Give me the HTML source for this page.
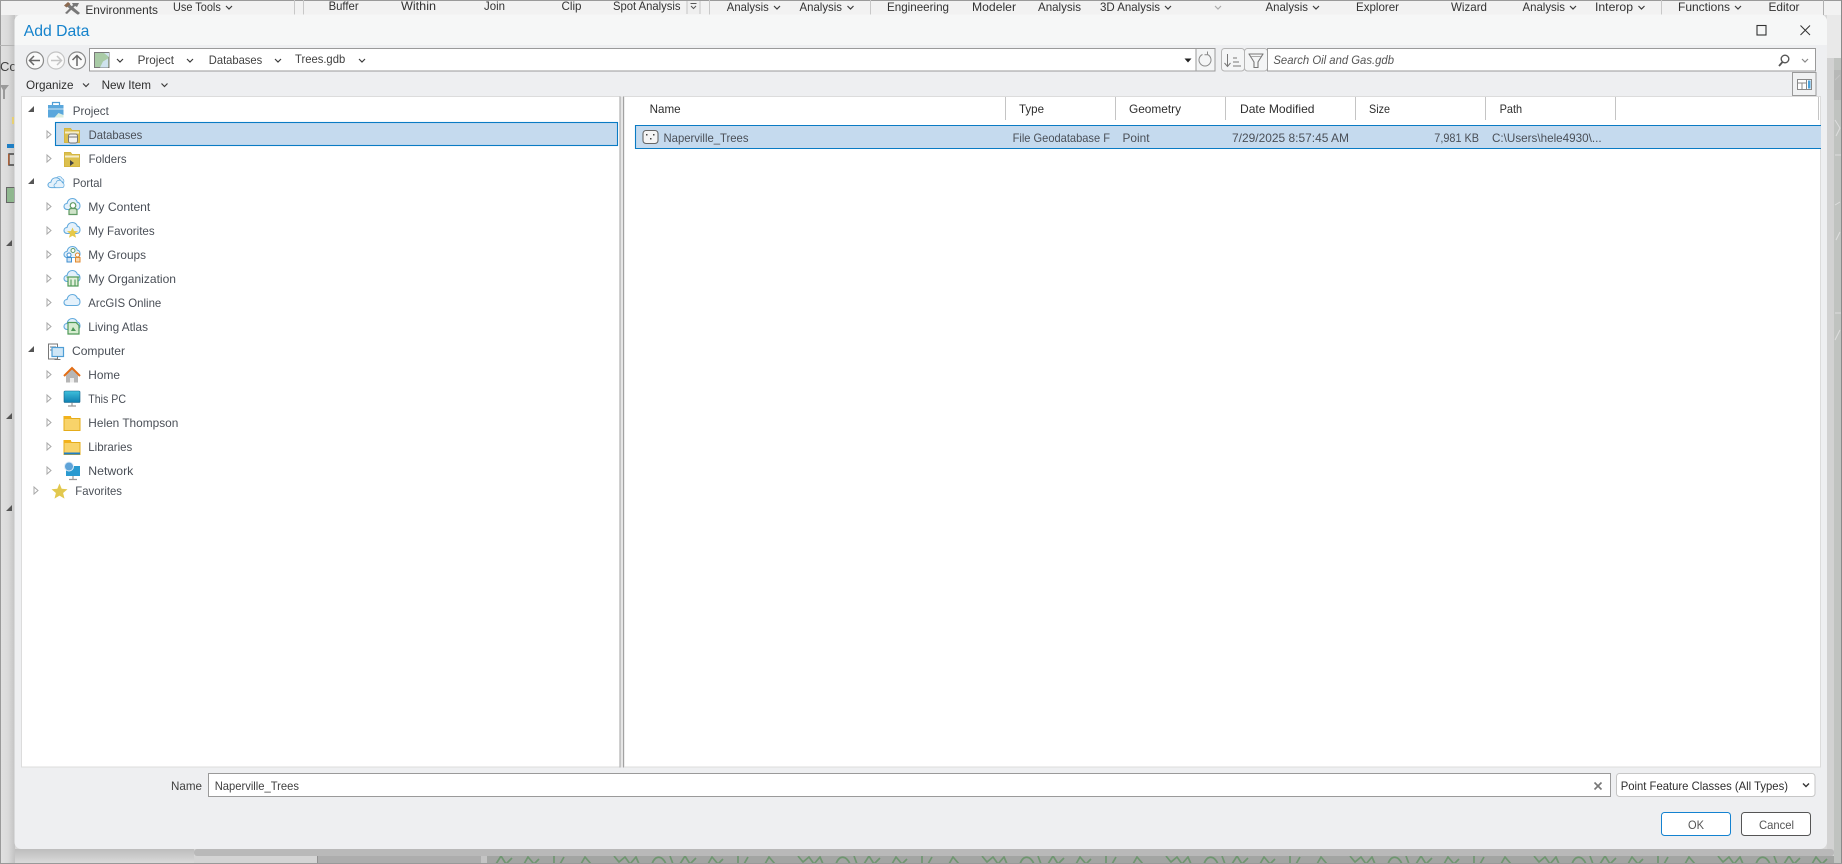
<!DOCTYPE html>
<html><head><meta charset="utf-8"><title>Add Data</title>
<style>
html,body{margin:0;padding:0;width:1842px;height:864px;overflow:hidden;background:#d8d8d8}
svg{display:block}
text{font-family:"Liberation Sans",sans-serif;font-size:12px;fill:#404040}
.t text{fill:#4a4f57}
.h text{fill:#2e2e2e}
.r text{fill:#333}
.c{fill:none;stroke:#3c3c3c;stroke-width:1.2}
.e{fill:#fff;stroke:#a8a8a8;stroke-width:1}
.rt{fill:#555}
.b{fill:#fff;stroke:#9a9a9a;stroke-width:1}
</style></head><body>
<svg width="1842" height="864" viewBox="0 0 1842 864" xmlns="http://www.w3.org/2000/svg">
<defs>
<linearGradient id="ls" x1="0" x2="1" y1="0" y2="0"><stop offset="0" stop-color="#e0e0e0"/><stop offset=".5" stop-color="#dadada"/><stop offset="1" stop-color="#c2c2c2"/></linearGradient>
<linearGradient id="bs" x1="0" x2="0" y1="0" y2="1"><stop offset="0" stop-color="#bdbdbd"/><stop offset="1" stop-color="#dcdcdc"/></linearGradient>
<linearGradient id="mon" x1="0" x2="0" y1="0" y2="1"><stop offset="0" stop-color="#3fc0dc"/><stop offset="1" stop-color="#0f7fb0"/></linearGradient>
<pattern id="map" width="184" height="10" patternUnits="userSpaceOnUse" x="494" y="855">
<rect width="184" height="10" fill="#a3a5a3"/>
<path d="M2 9l5-8 5 8 6-6M30 9l4-7 6 7 5-5M60 1v8h6l4-7M87 9l4-7 6 7M120 1l5 6 6-5 5 7 6-7 3 7M158 9c3-9 10-9 14 0M176 1l3 8" fill="none" stroke="#6f9670" stroke-width="1.700"/>
</pattern>
<g id="cloud"><path d="M3.500 13.500C1 13.500 0 12 0 10.500 0 8.800 1.300 7.600 3 7.500 3.500 4.200 5.800 2.500 8.300 2.500c2.500 0 4.300 1.500 5 3.700C15 6.400 16 8 16 10c0 2-1.300 3.500-3.500 3.500z" fill="#e4f1fb" stroke="#62aadd" stroke-width="1.100"/></g>
<g id="folder"><path d="M0 3.500V1.500h6l1.500 2h8.500v12H0z" fill="#f8d36a" stroke="#e5ac1a" stroke-width="1"/><rect x="0" y="1" width="7" height="3" fill="#f2b21c"/></g>
<g id="fy"><path d="M.5 15.500V1.500h6l1.500 2h7.500v12z" fill="#dcc04e" stroke="#d4b541"/><rect x="1" y="4.500" width="14" height="2" fill="#fff" opacity=".7"/></g>
</defs>

<!-- background app -->
<rect width="1842" height="864" fill="#d8d8d8"/>
<rect x="0" y="0" width="1842" height="15" fill="#f2f2f2"/>
<rect x="0" y="0" width="1842" height="1" fill="#9a9a9a"/>
<rect x="0" y="0" width="1" height="864" fill="#9a9a9a"/>
<rect x="1841" y="0" width="1" height="864" fill="#8a8a8a"/>
<rect x="1" y="15" width="14" height="849" fill="url(#ls)"/>
<rect x="0" y="45" width="15" height="1" fill="#b4b4b4"/>
<rect x="294" y="0" width="1" height="15" fill="#c8c8c8"/><rect x="303" y="0" width="1" height="15" fill="#c8c8c8"/>
<rect x="709" y="0" width="1" height="15" fill="#c8c8c8"/><rect x="870" y="0" width="1" height="15" fill="#c8c8c8"/>
<rect x="1661" y="0" width="1" height="15" fill="#c8c8c8"/><rect x="1823" y="0" width="1" height="15" fill="#b0b0b0"/>
<rect x="687" y="1" width="13" height="13" fill="#efefef"/><path d="M687 1v13M700 1v13" stroke="#c4c4c4" fill="none"/>
<path d="M690.500 3.500h6M691 6l2.500 2.500L696 6" fill="none" stroke="#555"/>
<path d="M65 5l3-2 12 10-2 2zM79 3l-2 4-2-1-8 8-2-1 8-8-1-2z" fill="#787878"/><path d="M64 5.500l4-3.500 2.500 2-4 3.500z" fill="#8c6a50"/>
<g class="r">
<text x="85.400" y="14" textLength="72.600" lengthAdjust="spacingAndGlyphs">Environments</text>
<text x="173" y="11" textLength="47.800" lengthAdjust="spacingAndGlyphs">Use Tools</text>
<text x="328.600" y="10" textLength="30" lengthAdjust="spacingAndGlyphs">Buffer</text>
<text x="401" y="10" textLength="35" lengthAdjust="spacingAndGlyphs">Within</text>
<text x="484" y="10" textLength="21" lengthAdjust="spacingAndGlyphs">Join</text>
<text x="561.500" y="10" textLength="20" lengthAdjust="spacingAndGlyphs">Clip</text>
<text x="613" y="10" textLength="67.500" lengthAdjust="spacingAndGlyphs">Spot Analysis</text>
<text x="726.800" y="11" textLength="42" lengthAdjust="spacingAndGlyphs">Analysis</text>
<text x="799.500" y="11" textLength="42.500" lengthAdjust="spacingAndGlyphs">Analysis</text>
<text x="887" y="11" textLength="62" lengthAdjust="spacingAndGlyphs">Engineering</text>
<text x="972" y="11" textLength="44" lengthAdjust="spacingAndGlyphs">Modeler</text>
<text x="1038" y="11" textLength="43" lengthAdjust="spacingAndGlyphs">Analysis</text>
<text x="1100" y="11" textLength="60" lengthAdjust="spacingAndGlyphs">3D Analysis</text>
<text x="1265.500" y="11" textLength="42.500" lengthAdjust="spacingAndGlyphs">Analysis</text>
<text x="1356" y="11" textLength="43" lengthAdjust="spacingAndGlyphs">Explorer</text>
<text x="1451" y="11" textLength="36" lengthAdjust="spacingAndGlyphs">Wizard</text>
<text x="1522.500" y="11" textLength="42.500" lengthAdjust="spacingAndGlyphs">Analysis</text>
<text x="1595" y="11" textLength="38" lengthAdjust="spacingAndGlyphs">Interop</text>
<text x="1678" y="11" textLength="52" lengthAdjust="spacingAndGlyphs">Functions</text>
<text x="1768.500" y="11" textLength="31" lengthAdjust="spacingAndGlyphs">Editor</text>
</g>
<g class="c">
<path d="M226 6l3 3 3-3M774 6l3 3 3-3M847.500 6l3 3 3-3M1165 6l3 3 3-3M1313 6l3 3 3-3M1570 6l3 3 3-3M1638.500 6l3 3 3-3M1735 6l3 3 3-3"/>
<path d="M1215 6l3 3 3-3" stroke="#aaa"/>
</g>
<!-- left slivers of background UI -->
<text x="0" y="71" style="font-size:13px">Co</text>
<path d="M0 85h9l-4 5v9H3v-9z" fill="#9a9a9a"/>
<rect x="12" y="117" width="2" height="7" fill="#e6cf72"/>
<rect x="7" y="144" width="7" height="4" fill="#1f7fc4"/>
<path d="M14 154H9v11h5" fill="none" stroke="#444" stroke-width="1.500"/><rect x="8" y="154" width="1.500" height="11" fill="#a8603a"/>
<rect x="6.500" y="187.500" width="8" height="15" fill="#8fb78f" stroke="#666"/>
<path d="M12 240v6H6zM12 413v6H6zM12 505v6H6z" fill="#555"/>
<!-- right side strips -->
<rect x="1827" y="15" width="7" height="849" fill="#d2d2d2"/>
<rect x="1827" y="15" width="14" height="43" fill="#e9e9e9"/>
<rect x="1834" y="58" width="7" height="806" fill="#c0c3c0"/>
<path d="M1835 80l5-5M1835 120l5 8-4 8M1835 155h6M1835 205l5-3M1836 240l4-8M1835 313h6M1835 340l5-10" stroke="#dedede" fill="none"/>
<rect x="1834" y="70" width="7" height="30" fill="#b0b0b0" opacity=".6"/>
<!-- bottom strips -->
<rect x="15" y="849" width="179" height="15" fill="url(#bs)"/>
<rect x="194" y="849" width="1640" height="7" fill="#b9b9b9" rx="3"/>
<rect x="194" y="856" width="123" height="8" fill="#d4d4d4"/>
<rect x="317" y="856" width="173" height="8" fill="#adadad"/>
<rect x="317" y="856" width="1" height="8" fill="#909090"/>
<rect x="481" y="856" width="6" height="8" fill="#c4c4c4"/>
<rect x="494" y="856" width="1340" height="8" fill="url(#map)"/>
<rect x="487" y="856" width="7" height="8" fill="#a3a5a3"/>
<rect x="0" y="863" width="1842" height="1" fill="#999"/>

<!-- dialog -->
<rect x="14.500" y="14.500" width="1812.500" height="834.500" rx="7" fill="#eeeff1"/>
<path d="M14.500 45V21.500a7 7 0 0 1 7-7H1820a7 7 0 0 1 7 7V45z" fill="#f6f7f7"/>
<text x="23.700" y="36" textLength="65.700" lengthAdjust="spacingAndGlyphs" style="font-size:16px;fill:#1583cc">Add Data</text>
<rect x="1757" y="25.500" width="9" height="9.500" fill="none" stroke="#333" stroke-width="1.100"/>
<path d="M1800.500 25.500l9.500 9.500M1810 25.500l-9.500 9.500" stroke="#333" stroke-width="1" fill="none"/>

<!-- nav -->
<g fill="#fafafa" stroke="#8a8a8a" stroke-width="1.200">
<circle cx="35" cy="60.500" r="8.500"/><circle cx="77" cy="60.500" r="8.500"/>
<circle cx="56" cy="60.500" r="8.500" stroke="#c4c4c4"/>
</g>
<path d="M40 60.500H30M34 56l-4.500 4.500L34 65" fill="none" stroke="#666" stroke-width="1.500"/>
<path d="M51 60.500h10M57 56l4.500 4.500L57 65" fill="none" stroke="#c4c4c4" stroke-width="1.500"/>
<path d="M77 66V55.500M72.500 60L77 55.500 81.500 60" fill="none" stroke="#666" stroke-width="1.500"/>

<rect x="89.500" y="48.500" width="1106.500" height="22.500" class="b"/>
<rect x="1196" y="48.500" width="19" height="22.500" fill="#f4f5f6" stroke="#9a9a9a"/>
<rect x="94.500" y="52.500" width="14.500" height="15" fill="#a9cba6" stroke="#7a7a7a"/>
<path d="M100 67.500l3-6 5-3V67.500zM104 53h5v4z" fill="#cfe3ee"/>
<path class="c" d="M117 59l3 3 3-3M187 59l3 3 3-3M275 59l3 3 3-3M359 59l3 3 3-3"/>
<text x="137.600" y="64" textLength="36.400" lengthAdjust="spacingAndGlyphs">Project</text>
<text x="208.800" y="64" textLength="53.400" lengthAdjust="spacingAndGlyphs">Databases</text>
<text x="295" y="63" textLength="50.200" lengthAdjust="spacingAndGlyphs">Trees.gdb</text>
<path d="M1184.500 58.500h7l-3.500 4z" fill="#222"/>
<path d="M1207.500 54.500a6 6 0 1 1-5 0M1207.500 51.500v3.300h-3" fill="none" stroke="#8a8a8a" stroke-width="1"/>

<rect x="1221.500" y="48.500" width="23" height="22.500" rx="3" fill="#f4f5f6" stroke="#b5b5b5"/>
<path d="M1227.500 54v12M1224.500 63l3 3.500 3-3.500M1233 58h4M1233 62h6M1233 66h8" fill="none" stroke="#777" stroke-width="1"/>
<rect x="1244.500" y="48.500" width="23" height="22.500" rx="3" fill="#f4f5f6" stroke="#b5b5b5"/>
<path d="M1248.500 54h15M1249 54l5 8v5.500h4V62l5-8" fill="none" stroke="#777" stroke-width="1.100"/><path d="M1251 56.500h10" stroke="#aaa"/>
<rect x="1267.500" y="48.500" width="548" height="22.500" class="b"/>
<text x="1273.400" y="64" textLength="120.600" lengthAdjust="spacingAndGlyphs" style="font-style:italic;fill:#555">Search Oil and Gas.gdb</text>
<circle cx="1785" cy="59" r="3.800" fill="none" stroke="#555" stroke-width="1.400"/><path d="M1782.500 62l-3.500 4" stroke="#555" stroke-width="1.800"/>
<path d="M1802 59l3 3 3-3" fill="none" stroke="#888" stroke-width="1.200"/>

<!-- toolbar -->
<text x="26" y="89" textLength="47.500" lengthAdjust="spacingAndGlyphs" style="fill:#2e2e2e">Organize</text>
<text x="101.600" y="89" textLength="49.400" lengthAdjust="spacingAndGlyphs" style="fill:#2e2e2e">New Item</text>
<path class="c" d="M83 83.500l3 3 3-3M161.500 83.500l3 3 3-3"/>
<rect x="1792.500" y="72.500" width="23.500" height="23" fill="#f0f1f2" stroke="#9a9a9a"/>
<rect x="1797.500" y="79.500" width="14" height="10" fill="#fff" stroke="#888"/><path d="M1797.500 83h9M1802 83v6.500M1806.500 79.500v10" stroke="#888" fill="none"/><rect x="1808" y="80.500" width="2.500" height="8" fill="#4ba3dc"/>

<!-- panes -->
<rect x="21.500" y="96.500" width="598.500" height="670.500" fill="#fff" stroke="#dcdcdc"/>
<rect x="624" y="96.500" width="1196.500" height="670.500" fill="#fff" stroke="#dcdcdc"/>
<rect x="620" y="96.500" width="3.500" height="671" fill="#e6e6e6"/>
<rect x="619.500" y="96.500" width="1" height="671" fill="#a2a2a2"/><rect x="623" y="96.500" width="1" height="671" fill="#a2a2a2"/>

<!-- tree selection -->
<rect x="55.500" y="122.500" width="562" height="23" fill="#c5daee" stroke="#0a7bc4" stroke-width="1.100"/>

<!-- tree expanders -->
<path class="rt" d="M34 106v6h-6zM34 178v6h-6zM34 346v6h-6z"/>
<g class="e">
<path d="M47 131v7l4-3.500zM47 155v7l4-3.500zM47 203v7l4-3.500zM47 227v7l4-3.500zM47 251v7l4-3.500zM47 275v7l4-3.500zM47 299v7l4-3.500zM47 323v7l4-3.500zM47 371v7l4-3.500zM47 395v7l4-3.500zM47 419v7l4-3.500zM47 443v7l4-3.500zM47 467v7l4-3.500zM34 487v7l4-3.500z"/>
</g>

<!-- tree icons -->
<path d="M52.500 105v-2.500h7V105" fill="none" stroke="#4f9ed6" stroke-width="1.200"/>
<rect x="48" y="105" width="15.500" height="12.500" fill="#5aa7dc"/><path d="M54.500 117.500l4-4.500 5 2v2.500z" fill="#dbeee0"/><rect x="48" y="108.500" width="15.500" height="1" fill="#fff" opacity=".7"/>
<use href="#fy" x="64" y="127"/><rect x="68.500" y="134" width="9" height="9" rx="2" fill="#f3f3f3" stroke="#777"/><path d="M68.500 137h9" stroke="#777"/>
<use href="#fy" x="64" y="151"/><path d="M70 160v6l4-3z" fill="#444"/>

<g transform="translate(54 175) scale(.62)"><use href="#cloud"/></g>
<g transform="translate(48 175.500) scale(.95 .9)"><use href="#cloud"/></g>
<g transform="translate(54 178.500) scale(.63 .68)"><use href="#cloud"/></g>
<use href="#cloud" x="64" y="196"/><circle cx="73" cy="205.500" r="2.800" fill="#fff" stroke="#5f9a63" stroke-width="1.200"/><path d="M69 214.500v-4a2.500 2.500 0 0 1 2.500-2h3a2.500 2.500 0 0 1 2.500 2v4z" fill="#cfe3c9" stroke="#5f9a63" stroke-width="1.200"/>
<use href="#cloud" x="64" y="220"/><path d="M72.500 227.500l1.500 3.500 4 .3-3 2.500 1 4-3.500-2.100-3.500 2.100 1-4-3-2.500 4-.3z" fill="#e6c94a"/>
<use href="#cloud" x="64" y="244"/><circle cx="69" cy="255" r="2" fill="#fff" stroke="#3f8fd0"/><circle cx="73" cy="250.500" r="2" fill="#fff" stroke="#5f9a63"/><circle cx="77.500" cy="255" r="2" fill="#fff" stroke="#e08a30"/><rect x="67" y="257.500" width="4.500" height="4.500" fill="#cfe3f5" stroke="#3f8fd0"/><rect x="75.500" y="257.500" width="4.500" height="4.500" fill="#f8d8b0" stroke="#e08a30"/>
<use href="#cloud" x="64" y="268"/><rect x="68" y="277" width="10" height="9" fill="#e2f0dc" stroke="#4f9a58" stroke-width="1.200"/><path d="M66.500 277h13M71 279.500v6.500M75 279.500v6.500" stroke="#4f9a58" stroke-width="1.100"/>
<use href="#cloud" x="64" y="292"/>
<use href="#cloud" x="64" y="316"/><path d="M68 322.500h8l3 3v8.500H68z" fill="#d6ecd0" stroke="#4f9a58" stroke-width="1.200"/><path d="M71 331l2-4 3 4z" fill="#4f9a58"/>

<rect x="48.500" y="344" width="9" height="15" fill="#fff" stroke="#777"/><path d="M50 347h6M50 350h6" stroke="#777"/>
<rect x="52" y="347.500" width="11.500" height="9" fill="#cfe6f6" stroke="#4f9ed6" stroke-width="1.200"/><path d="M57.500 356.500v2.500M54.500 359.500h6" stroke="#777"/>

<path d="M66 375.500L72 369l6 6.500v7H66z" fill="#b6b6b6"/><path d="M64 376l8-8 8 8" fill="none" stroke="#e26d14" stroke-width="2"/><rect x="70" y="378" width="4" height="4.500" fill="#ececec"/>
<rect x="64" y="391" width="16" height="11.500" rx="1" fill="url(#mon)" stroke="#0d5e85" stroke-width=".6"/><path d="M72 402.500v3M68 406h8" stroke="#999" stroke-width="1.200"/>
<use href="#folder" x="64" y="415"/>
<use href="#folder" x="64" y="439"/><rect x="64" y="452.500" width="16" height="2" fill="#1f7fc4"/>
<rect x="66" y="466" width="14" height="10" fill="#2a9ad0"/><path d="M73 476v3M69 479.500h8" stroke="#999" stroke-width="1.200"/><circle cx="69" cy="466.500" r="4.500" fill="#5fa3d8" stroke="#dcecf8"/>
<path d="M59.500 483.500l2.200 5.300 5.800.4-4.400 3.800 1.400 5.600-5-3-5 3 1.400-5.600-4.400-3.800 5.800-.4z" fill="#e2c84e"/>

<!-- tree text -->
<g class="t">
<text x="72.800" y="115" textLength="36" lengthAdjust="spacingAndGlyphs">Project</text>
<text x="88.600" y="139" textLength="53.700" lengthAdjust="spacingAndGlyphs">Databases</text>
<text x="88.600" y="163" textLength="38" lengthAdjust="spacingAndGlyphs">Folders</text>
<text x="72.700" y="187" textLength="29.300" lengthAdjust="spacingAndGlyphs">Portal</text>
<text x="88.300" y="211" textLength="62" lengthAdjust="spacingAndGlyphs">My Content</text>
<text x="88.300" y="235" textLength="66.400" lengthAdjust="spacingAndGlyphs">My Favorites</text>
<text x="88.300" y="259" textLength="57.700" lengthAdjust="spacingAndGlyphs">My Groups</text>
<text x="88.300" y="283" textLength="87.700" lengthAdjust="spacingAndGlyphs">My Organization</text>
<text x="88.300" y="307" textLength="73" lengthAdjust="spacingAndGlyphs">ArcGIS Online</text>
<text x="88.300" y="331" textLength="59.700" lengthAdjust="spacingAndGlyphs">Living Atlas</text>
<text x="72" y="355" textLength="53" lengthAdjust="spacingAndGlyphs">Computer</text>
<text x="88.300" y="379" textLength="31.700" lengthAdjust="spacingAndGlyphs">Home</text>
<text x="88.300" y="403" textLength="37.700" lengthAdjust="spacingAndGlyphs">This PC</text>
<text x="88.300" y="427" textLength="90" lengthAdjust="spacingAndGlyphs">Helen Thompson</text>
<text x="88.300" y="451" textLength="44" lengthAdjust="spacingAndGlyphs">Libraries</text>
<text x="88.300" y="475" textLength="45" lengthAdjust="spacingAndGlyphs">Network</text>
<text x="75.300" y="495" textLength="46.700" lengthAdjust="spacingAndGlyphs">Favorites</text>
</g>

<!-- list header -->
<g fill="#c4c4c4"><rect x="1005" y="97" width="1" height="23"/><rect x="1115" y="97" width="1" height="23"/><rect x="1225" y="97" width="1" height="23"/><rect x="1355" y="97" width="1" height="23"/><rect x="1485" y="97" width="1" height="23"/><rect x="1615" y="97" width="1" height="23"/><rect x="1818" y="97" width="1" height="23"/></g>
<g class="h">
<text x="649.600" y="113" textLength="31" lengthAdjust="spacingAndGlyphs">Name</text>
<text x="1019" y="113" textLength="25" lengthAdjust="spacingAndGlyphs">Type</text>
<text x="1129" y="113" textLength="52" lengthAdjust="spacingAndGlyphs">Geometry</text>
<text x="1240" y="113" textLength="74.500" lengthAdjust="spacingAndGlyphs">Date Modified</text>
<text x="1369" y="113" textLength="21" lengthAdjust="spacingAndGlyphs">Size</text>
<text x="1499.600" y="113" textLength="22.500" lengthAdjust="spacingAndGlyphs">Path</text>
</g>

<!-- list row -->
<rect x="635" y="125.500" width="1186" height="23" fill="#c5daee"/>
<path d="M1821 125.500H635.500v23H1821" fill="none" stroke="#0a7bc4" stroke-width="1.100"/>
<rect x="643" y="130.500" width="15" height="13" rx="3" fill="#f4f4f4" stroke="#666" stroke-width="1.100"/>
<rect x="646" y="134" width="1.500" height="1.500" fill="#444"/><rect x="653" y="134" width="1.500" height="1.500" fill="#444"/><rect x="650" y="138" width="1.500" height="1.500" fill="#444"/>
<g class="t">
<text x="663.500" y="142" textLength="85" lengthAdjust="spacingAndGlyphs">Naperville_Trees</text>
<text x="1012.600" y="142" textLength="97.400" lengthAdjust="spacingAndGlyphs">File Geodatabase F</text>
<text x="1122.500" y="142" textLength="27" lengthAdjust="spacingAndGlyphs">Point</text>
<text x="1232" y="142" textLength="117" lengthAdjust="spacingAndGlyphs">7/29/2025 8:57:45 AM</text>
<text x="1434.300" y="142" textLength="44.700" lengthAdjust="spacingAndGlyphs">7,981 KB</text>
<text x="1492" y="142" textLength="109.600" lengthAdjust="spacingAndGlyphs">C:\Users\hele4930\...</text>
</g>

<!-- footer -->
<text x="171" y="790" textLength="31" lengthAdjust="spacingAndGlyphs">Name</text>
<rect x="208.500" y="773.500" width="1402" height="23" class="b"/>
<text x="214.700" y="790" textLength="84.300" lengthAdjust="spacingAndGlyphs">Naperville_Trees</text>
<path d="M1594.500 782.500l7 7M1601.500 782.500l-7 7" stroke="#777" stroke-width="1.600" fill="none"/>
<rect x="1616.500" y="773.500" width="198.500" height="23" rx="3" fill="#fff" stroke="#c6c6c6"/>
<text x="1620.700" y="790" textLength="167.300" lengthAdjust="spacingAndGlyphs" style="fill:#2e2e2e">Point Feature Classes (All Types)</text>
<path d="M1803 783.500l3 3 3-3" fill="none" stroke="#333" stroke-width="1.400"/>
<rect x="1661.500" y="812.500" width="69" height="23" rx="3" fill="#fff" stroke="#1482d0" stroke-width="1"/>
<text x="1688" y="829" textLength="16" lengthAdjust="spacingAndGlyphs" style="fill:#555">OK</text>
<rect x="1741.500" y="812.500" width="69" height="23" rx="3" fill="#fff" stroke="#555" stroke-width="1"/>
<text x="1759" y="829" textLength="35" lengthAdjust="spacingAndGlyphs" style="fill:#555">Cancel</text>
</svg>
</body></html>
